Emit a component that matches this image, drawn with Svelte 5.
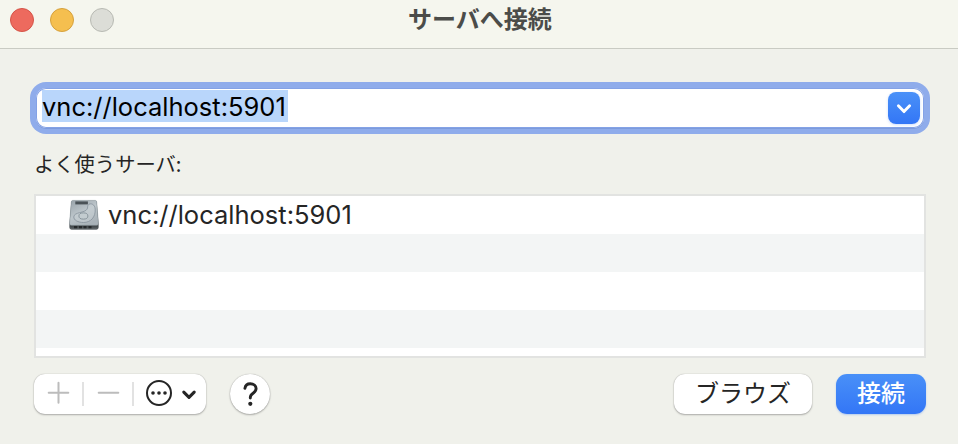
<script>
  let address = 'vnc://localhost:5901';
  let servers = ['vnc://localhost:5901', '', '', '', ''];
</script>

<div class="window">
  <header>
    <div class="lights"><i class="close"></i><i class="minimize"></i><i class="zoom"></i></div>
    <h1>サーバへ接続</h1>
  </header>
  <main>
    <div class="field">
      <span class="selection"><span class="address">{address}</span></span>
      <button class="dropdown" aria-label="履歴">
        <svg width="32" height="32" viewBox="0 0 32 32"><path d="M10.4 13.8 16 19.6l5.6-5.8" fill="none" stroke="#fff" stroke-width="2.9" stroke-linecap="round" stroke-linejoin="round" /></svg>
      </button>
    </div>
    <div class="label">よく使うサーバ:</div>
    <div class="list">
      {#each servers as server}
        <div class="row">
          {#if server}
            <svg class="disk" width="32" height="32" viewBox="0 0 32 32">
              <defs>
                <linearGradient id="metal" x1="0" y1="0" x2="0.6" y2="1">
                  <stop offset="0" stop-color="#98a2a9" />
                  <stop offset=".55" stop-color="#bdc6cb" />
                  <stop offset="1" stop-color="#a9b2b8" />
                </linearGradient>
                <linearGradient id="front" x1="0" y1="0" x2="0" y2="1">
                  <stop offset="0" stop-color="#6d7579" />
                  <stop offset=".9" stop-color="#454b4e" />
                  <stop offset="1" stop-color="#6a7073" />
                </linearGradient>
              </defs>
              <path d="M4.7 1.8h22.6q1.3 0 1.5 1.4L30.6 25v3.6q0 2.1-2.1 2.1h-25q-2.1 0-2.1-2.1V25L3.2 3.2q.2-1.4 1.5-1.4Z" fill="url(#front)" />
              <path d="M4.7 1.4h22.6q1.2 0 1.4 1.5l1.7 21.6q.1 1.8-1.7 1.8H3.3q-1.8 0-1.7-1.8L3.3 2.9q.2-1.5 1.4-1.5Z" fill="url(#metal)" stroke="#89949b" stroke-width=".5" />
              <path d="M7.3 2.4h12.6v3H7.3z" fill="#4a5257" />
              <path d="M19.6 7.8c.2-4.4 7.2-4.2 7.6 2.4.5 8-4.5 13.2-11.6 13.3-6 0-9.9-2.6-9.8-5.6.1-5 11.2-3.8 13.3-7.8.4-.8.5-1.5.5-2.3Z" fill="#c9d2d6" fill-opacity=".5" stroke="#85919a" stroke-width=".8" />
              <ellipse cx="15.4" cy="17" rx="4.5" ry="3.1" fill="#c3ccd0" stroke="#7b8991" stroke-width=".8" />
              <path d="M6 27.1h3.2v2.2H6m5-2.2h3v2.2h-3m4.5-2.2h3v2.2h-3m5-2.2h3v2.2h-3" fill="#25292b" />
            </svg>
            <span class="address">{server}</span>
          {/if}
        </div>
      {/each}
    </div>
    <footer>
      <div class="group">
        <svg width="172" height="40" viewBox="0 0 172 40">
          <g fill="none" stroke="#bcbcbc" stroke-width="2">
            <path d="M14.7 18.8h19.6M24.5 8.8v20M64.7 18.8h19.6" stroke-linecap="round" />
            <path d="M49 8v24M99 8v24" stroke="#e2e2e2" />
          </g>
          <circle cx="125" cy="19" r="12" fill="none" stroke="#252525" stroke-width="2" />
          <g fill="#252525"><circle cx="119" cy="19" r="1.8" /><circle cx="125" cy="19" r="1.8" /><circle cx="131" cy="19" r="1.8" /></g>
          <path d="M149.8 18.2 155 23.3l5.2-5.1" fill="none" stroke="#252525" stroke-width="3.1" stroke-linecap="round" stroke-linejoin="round" />
        </svg>
      </div>
      <button class="help" aria-label="ヘルプ">
        <svg width="40" height="40" viewBox="0 0 40 40"><path d="M14.9 14.4c.5-3.2 2.5-4.6 5.4-4.6 3.3 0 5.8 1.9 5.8 4.8 0 2.2-1.2 3.4-3 4.6-2 1.3-2.8 2.2-2.8 4.3v.6" fill="none" stroke="#252525" stroke-width="2.9" stroke-linecap="round" stroke-linejoin="round" /><circle cx="20.3" cy="29.8" r="2.1" fill="#252525" /></svg>
      </button>
      <button class="browse">ブラウズ</button>
      <button class="connect">接続</button>
    </footer>
  </main>
</div>

<style>
  .window { box-sizing: border-box; width: 958px; height: 444px; background: #f0f1eb; overflow: hidden; color: #252525; font-family: Inter, "Noto Sans CJK JP", sans-serif; }
  header { box-sizing: border-box; height: 49px; display: grid; grid-template-columns: 200px 1fr 198px; background: #f5f6ee; border-bottom: 1px solid #c9cbc3; }
  .lights { display: flex; gap: 16px; padding: 8px 10px; }
  .lights i { box-sizing: border-box; width: 24px; height: 24px; border-radius: 50%; border: 1px solid; }
  .close { background: #ed6a5e; border-color: #d55448 !important; }
  .minimize { background: #f5bf4f; border-color: #d6a13c !important; }
  .zoom { background: #dcddd7; border-color: #b8bab3 !important; }
  h1 { margin: 0; font: 700 24px/36px "Noto Sans CJK JP", sans-serif; color: #4b4c49; text-align: center; white-space: nowrap; }
  main { padding: 39px 32px 0 36px; }
  .field { box-sizing: border-box; width: 888px; height: 40px; display: flex; align-items: flex-start; justify-content: space-between; padding: 4px 4px 0 6px; background: #fff; border-radius: 10px; box-shadow: inset 0 0 0 1px #84a2e6, 0 1px 0 0 #7d9bdc, 0 0 0 6px #8faceb; }
  .selection { display: block; width: 246px; height: 32px; margin-top: -2px; background: #b9d6fb; color: #000; }
  .address { display: block; font: 400 25.5px/34px Inter, sans-serif; letter-spacing: 0; white-space: nowrap; }
  button { border: 0; padding: 0; }
  .dropdown { width: 32px; height: 32px; border-radius: 8px; background: linear-gradient(#4a91f8, #3376f6); box-shadow: 0 1px 3px #3478f640; }
  .dropdown svg { display: block; }
  .label { height: 40px; margin: 17px 0 0 -2px; font: 400 20.3px/36px "Noto Sans CJK JP", sans-serif; }
  .list { box-sizing: border-box; width: 892px; height: 164px; margin: 9px 0 0 -2px; border: 2px solid #e2e3e1; background: #fff; overflow: hidden; }
  .row { box-sizing: border-box; height: 38px; display: flex; align-items: center; padding-left: 32px; gap: 8px; }
  .row:nth-child(even) { background: #f3f5f5; }
  .disk { flex: none; }
  footer { display: flex; width: 892px; margin: 16px 0 0 -2px; }
  .group, .browse, .help { background: #fff; box-shadow: 0 0 1px #0005, 0 1px 2px #0004; }
  .group { width: 172px; height: 40px; border-radius: 11px; }
  .group svg, .help svg { display: block; }
  .help { width: 40px; height: 40px; margin-left: 24px; border-radius: 50%; }
  .browse, .connect { height: 40px; border-radius: 11px; font: 400 24px/36px "Noto Sans CJK JP", sans-serif; padding-bottom: 4px; }
  .browse { width: 138px; margin-left: auto; color: #252525; }
  .connect { width: 90px; margin-left: 24px; color: #fff; background: linear-gradient(#4990f8, #3376f6); box-shadow: 0 1px 2px #3478f650; font-weight: 500; }
</style>
